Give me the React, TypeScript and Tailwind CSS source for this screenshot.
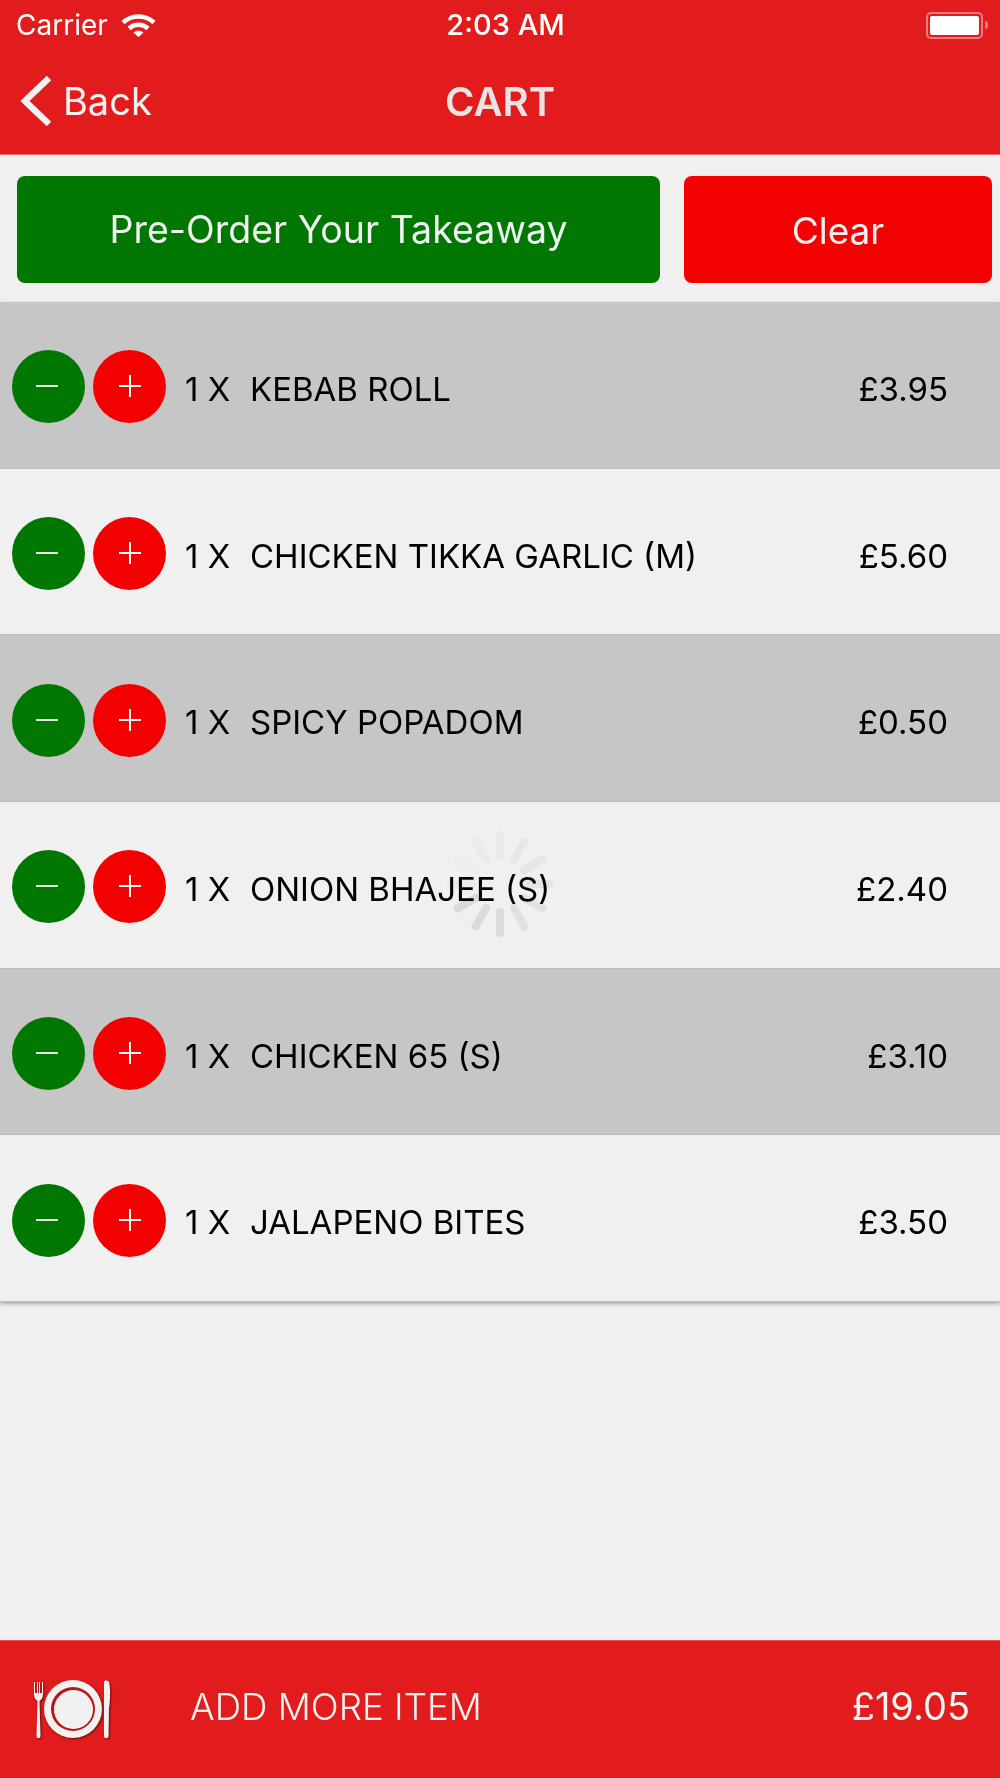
const items = [
  { name: 'KEBAB ROLL', price: '£3.95' },
  { name: 'CHICKEN TIKKA GARLIC (M)', price: '£5.60' },
  { name: 'SPICY POPADOM', price: '£0.50' },
  { name: 'ONION BHAJEE (S)', price: '£2.40' },
  { name: 'CHICKEN 65 (S)', price: '£3.10' },
  { name: 'JALAPENO BITES', price: '£3.50' },
]

// clockwise from the top spoke
const spokeOpacity = [0.33, 0.4, 0.45, 0.5, 0.6, 0.75, 0.9, 0.95, 1, 0.25, 0.15, 0.25]

function Wifi() {
  return (
    <svg width="35" height="25" viewBox="0 0 35 25" fill="none" stroke="white" strokeWidth="4.5">
      <path d="M2 9.5C11 1.5 24 1.5 33 9.5" />
      <path d="M8 15.5C13.5 10.5 21.5 10.5 27 15.5" />
      <path d="M17.5 24L12.5 19.5C15.5 17 19.5 17 22.5 19.5Z" fill="white" stroke="none" />
    </svg>
  )
}

function Battery() {
  return (
    <div className="flex items-center gap-[2px]">
      <div className="w-[57px] h-[27px] rounded-[5px] border-2 border-[#f07c7c] p-[2px]">
        <div className="w-full h-full rounded-[2px] bg-white" />
      </div>
      <div className="w-[3px] h-[8px] rounded-r-full bg-[#f07c7c]" />
    </div>
  )
}

function Spinner() {
  return (
    <svg className="absolute left-[444px] top-[828px] mix-blend-multiply" width="112" height="112" viewBox="0 0 112 112">
      {spokeOpacity.map((o, i) => (
        <line
          key={i}
          x1="56"
          y1="7"
          x2="56"
          y2="28"
          stroke="#e8e8e8"
          strokeWidth="8"
          strokeLinecap="round"
          opacity={o}
          transform={`rotate(${i * 30} 56 56)`}
        />
      ))}
    </svg>
  )
}

function PlateIcon() {
  return (
    <svg width="78" height="60" viewBox="0 0 78 60" className="drop-shadow-[1px_1px_1px_rgba(60,0,0,0.7)]">
      <path d="M1 2V14C1 18 3 20 4.5 21L3.5 56C3.5 59 7.5 59 7.5 56L6.5 21C8 20 10 18 10 14V2H9V13H7V2H6V13H5V2H4V13H2V2Z" fill="#f1f1f1" />
      <circle cx="40" cy="29" r="29" fill="#f1f1f1" />
      <circle cx="40" cy="29" r="22" fill="#b81616" />
      <circle cx="40.5" cy="29.5" r="19.5" fill="#f1f1f1" />
      <path d="M71 56V2C71 0 75 0 76 2C77.5 8 77.5 20 76 28L75.5 56C75.5 59 71 59 71 56Z" fill="#f1f1f1" />
    </svg>
  )
}

function CartRow({ name, price, shaded }: { name: string; price: string; shaded: boolean }) {
  return (
    <div className={`h-[166.67px] flex items-center pl-3 pt-1 border-b border-[#bdbdbd] ${shaded ? 'bg-[#c6c6c6]' : 'bg-[#f0f0f0]'}`}>
      <div className="w-[73px] h-[73px] rounded-full bg-[#007700] flex items-center justify-center">
        <div className="w-[22px] h-[2px] -ml-[3px] -mt-px bg-[#e6f0e6]" />
      </div>
      <div className="ml-2 w-[73px] h-[73px] rounded-full bg-[#f30000] relative flex items-center justify-center">
        <div className="w-[22px] h-[2px] -mt-px bg-white" />
        <div className="absolute w-[2px] h-[22px] -mt-px bg-white" />
      </div>
      <div className="ml-[19px] w-[65px] mt-[6px] text-[33px] text-black">1 X</div>
      <div className="flex-1 mt-[6px] text-[33px] text-black">{name}</div>
      <div className="pr-[52px] mt-[6px] text-[33px] text-black">{price}</div>
    </div>
  )
}

export default function App() {
  return (
    <div className="relative w-[1000px] h-[1778px] bg-[#f0f0f0] flex flex-col overflow-hidden font-['Inter',sans-serif]">
      <header className="h-[155px] bg-[#e21c1c] border-b border-[#ee6a6a] flex flex-col">
        <div className="h-[50px] pl-4 pr-3 flex items-center justify-between text-white">
          <div className="flex-1 flex items-center gap-[13px] text-[28px]">
            <span>Carrier</span>
            <Wifi />
          </div>
          <div className="pl-[7px] text-[29px] font-medium">2:03 AM</div>
          <div className="flex-1 flex justify-end">
            <Battery />
          </div>
        </div>
        <div className="flex-1 relative flex items-center justify-center">
          <div className="absolute left-[20px] top-[21px] flex items-center gap-[11px] text-[#f1f1f1]">
            <svg width="32" height="52" viewBox="0 0 32 52" fill="none" stroke="#f1f1f1" strokeWidth="6.5">
              <path d="M29 3L5 26L29 49" />
            </svg>
            <span className="text-[38px] mt-[2px]">Back</span>
          </div>
          <span className="text-[40px] font-semibold text-[#e8e4e4]">CART</span>
        </div>
      </header>

      <div className="flex gap-6 pl-[17px] pr-2 pt-[21px] pb-[19px]">
        <button className="w-[643px] h-[107px] pt-[2px] rounded-lg bg-[#007700] text-[#f1f1f1] text-[37.5px]">Pre-Order Your Takeaway</button>
        <button className="flex-1 h-[107px] pt-[2px] rounded-lg bg-[#f30000] text-[#f1f1f1] text-[37px]">Clear</button>
      </div>

      <div className="shadow-[0_2px_4px_rgba(0,0,0,0.3)]">
        {items.map((item, i) => (
          <CartRow key={item.name} name={item.name} price={item.price} shaded={i % 2 === 0} />
        ))}
      </div>

      <Spinner />

      <footer className="mt-auto h-[138px] bg-[#e21c1c] border-t border-[#ee5050] flex items-center pl-[33px] pr-[30px] text-[#f4f4f4]">
        <PlateIcon />
        <span className="ml-[79px] flex-1 -mt-[6px] text-[36.7px] font-light">ADD MORE ITEM</span>
        <span className="-mt-[6px] text-[38px]">£19.05</span>
      </footer>
    </div>
  )
}
